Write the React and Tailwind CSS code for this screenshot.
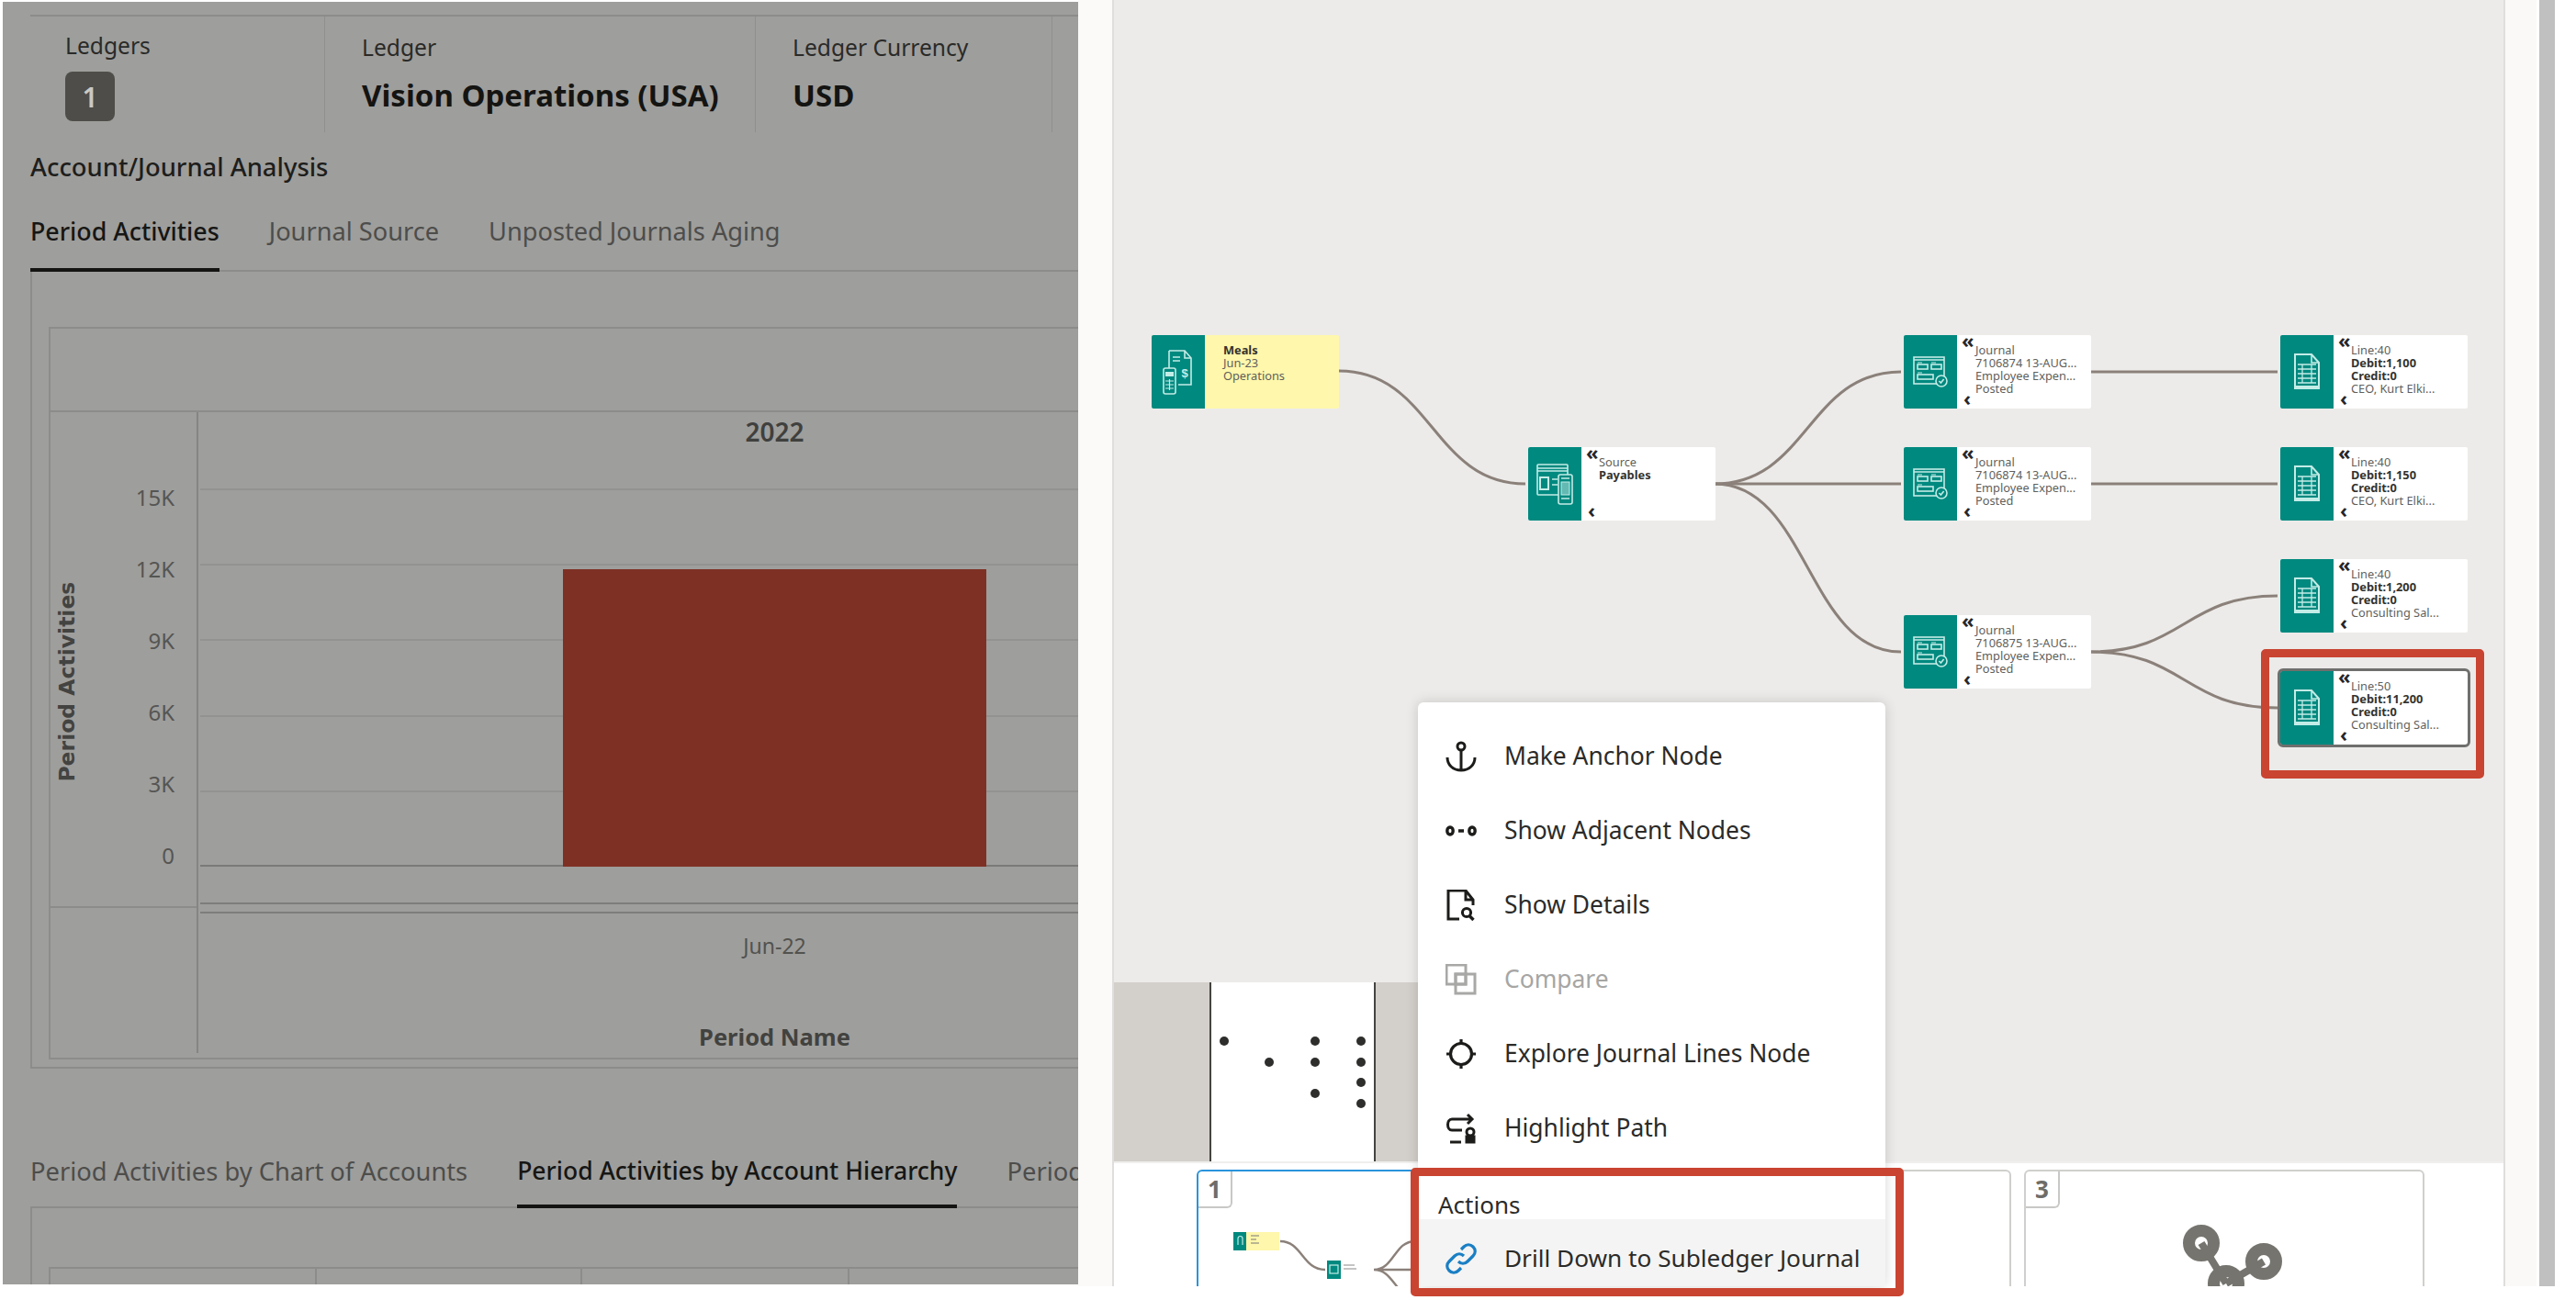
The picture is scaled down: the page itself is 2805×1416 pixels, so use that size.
const FONT = { fontFamily: '"Noto Sans", "Open Sans", sans-serif' };
const TEAL = "bg-[#00897f]";

function Stat({ label, value, className }) {
  return (
    <div className={"flex flex-col h-full border-r border-[#8f8f8d] " + className}>
      <span className="text-[24.6px] leading-[32px] text-[#2a2a28] mt-[18px]">{label}</span>
      <span className="text-[33px] leading-[44px] font-bold text-[#141412] mt-[14px] whitespace-nowrap">{value}</span>
    </div>
  );
}

function Chart() {
  const labels = ["15K", "12K", "9K", "6K", "3K", "0"];
  return (
    <div className="ml-[18px] h-[798px] w-[1420px] border-l-2 border-t-2 border-b-2 border-[#8c8c8a]">
      <div className="h-[91px] border-b-2 border-[#8c8c8a]" />
      <div className="flex h-[703px]">
        <div className="w-[161px] shrink-0 border-r-2 border-[#858583] flex flex-col h-[698px]">
          <div className="h-[540px] border-b-2 border-[#8c8c8a] flex shrink-0">
            <div className="w-[40px] flex items-center justify-center h-full">
              <span className="block -rotate-90 whitespace-nowrap font-bold text-[#434341] mt-[50px] -ml-[2px] text-[23.5px]" style={{ fontFamily: '"DejaVu Sans", sans-serif' }}>Period Activities</span>
            </div>
            <div className="flex-1 flex flex-col items-end pr-[24px] pt-[54px]">
              {labels.map((l) => (
                <div key={l} className="h-[78px] flex items-center text-[24px] text-[#555553]">{l}</div>
              ))}
            </div>
          </div>
        </div>
        <div className="w-[1253px] shrink-0 flex flex-col pl-[2px]">
          <div className="h-[42px] flex items-center justify-center text-[28px] font-semibold text-[#40403e]">2022</div>
          <div className="h-[41px]" />
          <div className="relative h-[412px]">
            {[0, 1, 2, 3, 4].map((i) => (
              <div key={i} className="h-[82.2px] border-t-2 border-[#929290]" />
            ))}
            <div className="absolute left-0 right-0 bottom-0 border-b-2 border-[#7a7a78]" />
            <div className="absolute left-[395px] bottom-0 w-[461px] h-[324px] bg-[#7f3024]" />
          </div>
          <div className="h-[39px]" />
          <div className="h-[12px] border-t-2 border-b-2 border-[#7d7d7b]" />
          <div className="h-[70px] flex items-center justify-center text-[23px] text-[#52524f]">Jun-22</div>
          <div className="h-[48px]" />
          <div className="h-[32px] flex items-center justify-center text-[25.5px] font-bold text-[#42423f]">Period Name</div>
        </div>
      </div>
    </div>
  );
}

function LeftPanel() {
  return (
    <div className="w-[1171px] ml-[3px] mt-[2px] h-[1397px] shrink-0 bg-[#9e9e9c] overflow-hidden pl-[30px]">
      <div className="mt-[14px] border-t-2 border-[#8c8c8a] h-[128px] flex w-[1200px]">
        <div className="w-[321px] h-full border-r border-[#8f8f8d] pl-[38px] flex flex-col">
          <span className="text-[24.6px] leading-[32px] text-[#2a2a28] mt-[16px]">Ledgers</span>
          <span className="mt-[12px] w-[54px] h-[54px] rounded-[8px] bg-[#4e4d49] text-[#c9c9c6] text-[30px] font-semibold flex items-center justify-center">1</span>
        </div>
        <Stat label="Ledger" value="Vision Operations (USA)" className="w-[469px] pl-[40px]" />
        <Stat label="Ledger Currency" value="USD" className="w-[323px] pl-[40px]" />
      </div>
      <div className="mt-[19px] text-[27.4px] leading-[38px] font-medium text-[#1e1e1c]">Account/Journal Analysis</div>
      <div className="mt-[17px] h-[78px] w-[1200px] border-b-2 border-[#8c8c8a] flex gap-[54px] text-[27.2px]">
        <div className="h-[78px] pt-[14px] border-b-4 border-[#141412] font-medium text-[26.8px] text-[#161614]">Period Activities</div>
        <div className="pt-[14px] text-[#4d4d4b]">Journal Source</div>
        <div className="pt-[14px] text-[#4d4d4b]">Unposted Journals Aging</div>
      </div>
      <div className="border-l-2 border-b-2 border-[#8c8c8a] w-[1200px] h-[868px] pt-[60px]">
        <Chart />
      </div>
      <div className="mt-[88px] h-[64px] w-[1200px] border-b-2 border-[#8c8c8a] flex gap-[54px] text-[27.3px] whitespace-nowrap">
        <div className="pt-[4px] text-[#4d4d4b]">Period Activities by Chart of Accounts</div>
        <div className="h-[64px] pt-[4px] border-b-4 border-[#141412] font-medium text-[26.5px] text-[#161614]">Period Activities by Account Hierarchy</div>
        <div className="pt-[4px] text-[#4d4d4b]">Period Activities</div>
      </div>
      <div className="border-l-2 border-[#8c8c8a] w-[1200px] h-[90px] pl-[18px] pt-[64px]">
        <div className="h-[40px] border-l-2 border-t-2 border-[#8c8c8a] flex">
          <div className="w-[290px] border-r-2 border-[#8c8c8a]" />
          <div className="w-[289px] border-r-2 border-[#8c8c8a]" />
          <div className="w-[291px] border-r-2 border-[#8c8c8a]" />
        </div>
      </div>
    </div>
  );
}

const ST = { fill: "none", stroke: "#c4ece7", strokeWidth: 1.6 };

function IconMeals() {
  return (
    <svg width="34" height="50" viewBox="0 0 34 50">
      <path d="M7 2h17l7 8v29H17" {...ST} />
      <path d="M7 2v19M24 2v8h7M11 9h8M11 13h8" {...ST} />
      <text x="24" y="31" fontSize="13" fontWeight="700" fill="#c4ece7" textAnchor="middle" fontFamily="Liberation Sans">$</text>
      <rect x="1" y="21" width="13" height="28" rx="2" {...ST} />
      <rect x="3" y="25" width="9" height="5" fill="#c4ece7" />
      <path d="M3 35h9M3 39h9M3 43h9M7.5 33v12" {...ST} strokeWidth="1.2" />
    </svg>
  );
}
function IconSource() {
  return (
    <svg width="40" height="46" viewBox="0 0 40 46">
      <rect x="1" y="2" width="33" height="33" rx="1" {...ST} />
      <path d="M1 6h33M1 9h33" {...ST} />
      <rect x="4" y="16" width="9" height="13" {...ST} strokeWidth="2" />
      <path d="M17 18h6M17 24h6" {...ST} />
      <rect x="24" y="13" width="15" height="32" rx="2" fill="#00897f" stroke="#c4ece7" strokeWidth="1.6" />
      <rect x="27" y="21" width="9" height="14" fill="#c4ece7" fillOpacity="0.5" stroke="#c4ece7" />
      <path d="M27 17h9M27 39h9" {...ST} />
    </svg>
  );
}
function IconJournal() {
  return (
    <svg width="38" height="34" viewBox="0 0 38 34">
      <rect x="1" y="1" width="33" height="29" {...ST} />
      <path d="M1 4h33" {...ST} />
      <rect x="5" y="9" width="11" height="5" {...ST} />
      <rect x="20" y="9" width="11" height="5" {...ST} />
      <rect x="5" y="20" width="17" height="5" {...ST} />
      <path d="M5 7h5M20 7h5M5 18h5" {...ST} strokeWidth="1" />
      <circle cx="31" cy="27" r="6" fill="#00897f" stroke="#c4ece7" strokeWidth="1.6" />
      <path d="M28.4 27l2 2 3.2-4" {...ST} />
    </svg>
  );
}
function IconLine() {
  return (
    <svg width="30" height="40" viewBox="0 0 30 40">
      <path d="M2 1h18l8 9v28H2z" {...ST} strokeWidth="2" />
      <path d="M20 1v9h8" {...ST} />
      <path d="M5 12h20M5 17h20M5 22h20M5 27h20M5 32h20M10 12v20M20 12v20" {...ST} strokeWidth="1.3" />
      <path d="M2 35h26v3.5H2z" fill="#c4ece7" />
    </svg>
  );
}

function Node({ x, y, icon, lines, bg = "bg-white", arrows = true, selected, pad = 20 }) {
  return (
    <div
      className={"absolute w-[204px] h-[80px] flex rounded-[2px] " + bg + (selected ? " outline-[3px] outline-[#6f6f6d] rounded-[3px]" : "")}
      style={{ left: x - 1213, top: y }}
    >
      <div className={"w-[58px] h-full flex items-center justify-center shrink-0 rounded-l-[2px] " + TEAL}>{icon}</div>
      <div className="relative flex-1 text-[12.8px] leading-[14px] text-[#5f5f5c] pt-[9px]" style={{ paddingLeft: pad }}>
        {lines.map((l, i) => (
          <div key={i} className={"whitespace-nowrap " + (l.b ? "font-bold text-[#33332f]" : "")}>{l.t}</div>
        ))}
        {arrows && (
          <>
            <span className="absolute left-[5px] top-[-6px] text-[22px] leading-[22px] font-bold text-[#26262a]">«</span>
            <span className="absolute left-[7px] bottom-[4px] text-[22px] leading-[16px] font-bold text-[#26262a]">‹</span>
          </>
        )}
      </div>
    </div>
  );
}

function Canvas() {
  const o = (x) => x - 1213;
  const edge = (a, b, c, d) => {
    const m = (a + c) / 2;
    return `M${o(a)} ${b}C${o(m)} ${b} ${o(m)} ${d} ${o(c)} ${d}`;
  };
  const paths = [
    edge(1458, 404, 1661, 527),
    edge(1867, 527, 2070, 405),
    edge(1867, 527, 2070, 527),
    edge(1867, 527, 2070, 710),
    edge(2277, 405, 2480, 405),
    edge(2277, 527, 2480, 527),
    edge(2277, 710, 2480, 649),
    edge(2277, 710, 2480, 771),
  ];
  const j = (n) => [{ t: "Journal" }, { t: n + " 13-AUG..." }, { t: "Employee Expen..." }, { t: "Posted" }];
  const l = (a, d, s) => [{ t: "Line:" + a }, { t: "Debit:" + d, b: true }, { t: "Credit:0", b: true }, { t: s }];
  const dots = [[1333, 1134], [1382, 1157], [1432, 1134], [1432, 1157], [1432, 1191], [1482, 1134], [1482, 1157], [1482, 1179], [1482, 1202]];
  return (
    <div className="relative h-[1265px] bg-[#ecebe9] overflow-hidden">
      <svg className="absolute inset-0" width="1513" height="1265" fill="none" stroke="#8b817a" strokeWidth="3">
        {paths.map((d, i) => <path key={i} d={d} />)}
      </svg>
      <Node x={1254} y={365} bg="bg-[#fff7ab]" arrows={false} icon={<IconMeals />} lines={[{ t: "Meals", b: true }, { t: "Jun-23" }, { t: "Operations" }]} />
      <Node x={1664} y={487} icon={<IconSource />} pad={19} lines={[{ t: "Source" }, { t: "Payables", b: true }]} />
      <Node x={2073} y={365} icon={<IconJournal />} lines={j("7106874")} />
      <Node x={2073} y={487} icon={<IconJournal />} lines={j("7106874")} />
      <Node x={2073} y={670} icon={<IconJournal />} lines={j("7106875")} />
      <Node x={2483} y={365} icon={<IconLine />} pad={19} lines={l("40", "1,100", "CEO, Kurt Elki...")} />
      <Node x={2483} y={487} icon={<IconLine />} pad={19} lines={l("40", "1,150", "CEO, Kurt Elki...")} />
      <Node x={2483} y={609} icon={<IconLine />} pad={19} lines={l("40", "1,200", "Consulting Sal...")} />
      <Node x={2483} y={731} icon={<IconLine />} pad={19} selected lines={l("50", "11,200", "Consulting Sal...")} />
      <div className="absolute left-0 bottom-0 w-[500px] h-[195px] bg-[#d3cfca] pl-[104px]">
        <div className="relative h-full w-[181px] bg-white border-x-2 border-[#444441]">
          {dots.map(([x, y], i) => (
            <span key={i} className="absolute w-[10px] h-[10px] rounded-full bg-[#2e2e2c]" style={{ left: x - 1319 - 5, top: y - 1070 - 5 }} />
          ))}
        </div>
      </div>
    </div>
  );
}

function Thumb({ n, active, children }) {
  return (
    <div className={"relative w-[436px] h-[200px] shrink-0 rounded-[6px] border-2 " + (active ? "border-[#2a94dc]" : "border-[#cfcfcd]")}>
      <div className="w-[37px] h-[40px] border-r-2 border-b-2 border-[#c8c8c6] rounded-br-[6px] flex items-center justify-center text-[26px] font-bold text-[#6e6d69]">{n}</div>
      {children}
    </div>
  );
}

function Bottom() {
  return (
    <div className="h-[136px] bg-white border-t-2 border-[#f0efed] overflow-hidden flex gap-[14.5px] pl-[90px] pt-[7px]">
      <Thumb n="1" active>
        <svg className="absolute left-[38px] top-[66px]" width="395" height="60" viewBox="0 0 395 60" fill="none">
          <rect x="0" y="0" width="14" height="20" fill="#00897f" />
          <path d="M5 14v-7a2 2 0 0 1 5 0v7" stroke="#c4ece7" strokeWidth="1.2" />
          <rect x="14" y="0" width="36" height="20" fill="#fff7ab" />
          <path d="M19 4h9M19 8h6M19 12h9" stroke="#777" strokeWidth="1" />
          <path d="M51 10C75 10 75 41 100 41" stroke="#8b817a" strokeWidth="2.4" />
          <rect x="102" y="31" width="15" height="20" fill="#00897f" />
          <rect x="105" y="36" width="9" height="9" stroke="#c4ece7" strokeWidth="1.2" />
          <path d="M120 36h12M120 40h14" stroke="#888" strokeWidth="1" />
          <path d="M153 41C175 41 175 10 198 10M153 41H198M153 41C175 41 175 70 198 70" stroke="#8b817a" strokeWidth="2.4" />
        </svg>
      </Thumb>
      <Thumb n="2" />
      <Thumb n="3">
        <svg className="absolute left-[170px] top-[55px]" width="110" height="110" viewBox="0 0 110 110" fill="none">
          <path d="M21 23L48 67M89 43L48 67" stroke="#75746e" strokeWidth="8" />
          <circle cx="21" cy="23" r="13.5" stroke="#75746e" strokeWidth="13" />
          <circle cx="89" cy="43" r="13.5" stroke="#75746e" strokeWidth="13" />
          <circle cx="48" cy="67" r="13.5" stroke="#75746e" strokeWidth="13" />
        </svg>
      </Thumb>
    </div>
  );
}

const I = { width: 34, height: 34, viewBox: "0 0 34 34", fill: "none", stroke: "#1c1c1a", strokeWidth: 3 };
const menuIcons = {
  anchor: (
    <svg {...I}><circle cx="17" cy="6" r="4" /><path d="M17 10v22M2 18c0 8 6 14 15 14s15-6 15-14" /></svg>
  ),
  adj: (
    <svg {...I}><ellipse cx="5" cy="17" rx="3.2" ry="4" strokeWidth="3.4" /><ellipse cx="29" cy="17" rx="3.2" ry="4" strokeWidth="3.4" /><path d="M14 17h6" strokeWidth="3.6" /></svg>
  ),
  details: (
    <svg {...I}><path d="M15 32H3V1h19l8 10v6M22 1v10h8" /><circle cx="23" cy="25" r="4.6" /><path d="M26.5 29l4 4" strokeWidth="3.4" /></svg>
  ),
  compare: (
    <svg {...I} stroke="#a8a8a6"><rect x="1" y="1" width="21" height="21" /><rect x="11" y="11" width="21" height="21" /><rect x="11" y="11" width="11" height="11" /></svg>
  ),
  explore: (
    <svg {...I}><circle cx="17" cy="17" r="11.5" strokeWidth="3.2" /><path d="M17 1v5M17 28v5M1 17h5M28 17h5" strokeWidth="3.2" /></svg>
  ),
  path: (
    <svg {...I}><path d="M28 7H7C1 7 1 19 7 19h11M24 2l5 5-5 5M5 32h12" /><circle cx="27" cy="21" r="4" /><rect x="23" y="26" width="8" height="6" fill="#1c1c1a" /></svg>
  ),
  link: (
    <svg {...I} stroke="#1a7fc4" strokeWidth="3.2"><path d="M14 20c3 3 7 3 10 0l6-6c3-3 3-7 0-10s-7-3-10 0l-3 3" /><path d="M20 14c-3-3-7-3-10 0l-6 6c-3 3-3 7 0 10s7 3 10 0l3-3" /></svg>
  ),
};

function MenuItem({ icon, label, disabled }) {
  return (
    <div className={"h-[81px] flex items-center pl-[30px] gap-[30px] text-[26.4px] " + (disabled ? "text-[#a6a6a4]" : "text-[#2b2b29]")}>
      <span className="w-[34px] h-[34px] flex items-center justify-center">{icon}</span>
      <span className="whitespace-nowrap">{label}</span>
    </div>
  );
}

function Menu() {
  return (
    <div className="absolute left-[1544px] top-[765px] w-[509px] h-[636px] bg-white rounded-t-[6px] shadow-[0_0_14px_rgba(0,0,0,0.16)] pt-[18px] overflow-hidden">
      <MenuItem icon={menuIcons.anchor} label="Make Anchor Node" />
      <MenuItem icon={menuIcons.adj} label="Show Adjacent Nodes" />
      <MenuItem icon={menuIcons.details} label="Show Details" />
      <MenuItem icon={menuIcons.compare} label="Compare" disabled />
      <MenuItem icon={menuIcons.explore} label="Explore Journal Lines Node" />
      <MenuItem icon={menuIcons.path} label="Highlight Path" />
      <div className="h-[59px] flex items-end pl-[22px] text-[26px] leading-[32px] text-[#2b2b29]">Actions</div>
      <div className="h-[73px] bg-[#f4f4f4] flex items-center pl-[30px] pt-[12px] gap-[30px] text-[26.2px] text-[#2b2b29]">
        <span className="w-[34px] h-[34px] flex items-center justify-center">{menuIcons.link}</span>
        <span className="whitespace-nowrap">Drill Down to Subledger Journal</span>
      </div>
    </div>
  );
}

export default function App() {
  return (
    <div className="relative w-[2805px] h-[1416px] bg-white overflow-hidden" style={FONT}>
      <div className="flex h-[1401px] overflow-hidden">
        <LeftPanel />
        <div className="w-[39px] shrink-0 bg-[#fbfaf9] border-r-2 border-[#dfdedc]" />
        <div className="w-[1513px] shrink-0 flex flex-col">
          <Canvas />
          <Bottom />
        </div>
        <div className="w-[36px] shrink-0 bg-[#faf9f8] border-l-2 border-[#dfdedc]" />
        <div className="w-[3px]" />
        <div className="w-[17px] shrink-0 bg-[#c0c0c0]" />
      </div>
      <Menu />
      <div className="absolute left-[2462px] top-[707px] w-[243px] h-[141px] border-[9px] border-[#c94431] rounded-[5px]" />
      <div className="absolute left-[1536px] top-[1272px] w-[537px] h-[140px] border-[9px] border-[#c94431] rounded-[5px]" />
    </div>
  );
}
